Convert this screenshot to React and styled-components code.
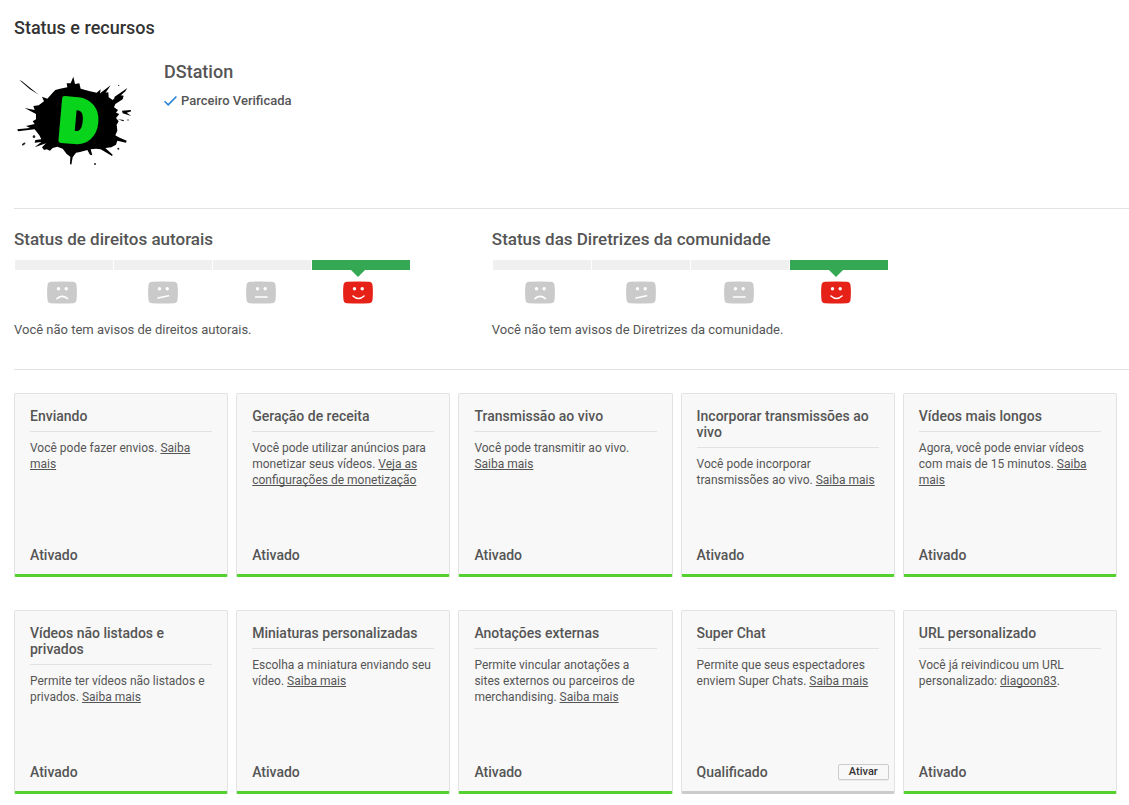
import React from "react";
import styled, {createGlobalStyle} from "styled-components";

const GlobalStyle = createGlobalStyle`
body {
    margin: 0;
    background: #fff;
    color: #555;
    font-family: Roboto, "Liberation Sans", sans-serif;
    font-size: 13px;
}`

const Page = styled.main`
padding: 16px 0 11px 14px;
`

const PageTitle = styled.h1`
margin: 0;
font-size: 18px;
line-height: 24px;
font-weight: 500;
color: #333;
`

const Channel = styled.section`
display: flex;
gap: 30px;
padding: 20px 0 28px;
border-bottom: 1px solid #e2e2e2;
`

const Avatar = styled.svg`
width: 120px;
height: 120px;
`

const AvatarLetter = styled.text`
font: 900 176px Roboto, sans-serif;
fill: #08d41c;
stroke: #08d41c;
stroke-width: 16px;
stroke-linejoin: round;
`

const Heading = styled.h2`
margin: 0;
font-size: 17px;
line-height: 24px;
font-weight: 500;
`

const ChannelName = styled(Heading)`
font-size: 18px;
`

const Verified = styled.div`
display: flex;
align-items: center;
gap: 4px;
margin-top: 9px;
line-height: 16px;
font-weight: 500;
`

const Standings = styled.div`
display: grid;
grid-template-columns: 3fr 4fr;
padding: 18px 0 30px;
border-bottom: 1px solid #e2e2e2;
`

const Gauge = styled.div`
display: flex;
gap: 1px;
max-width: 395px;
margin: 9px 0 0 1px;
`

const Segment = styled.div`
position: relative;
flex: 1;
height: 10px;
background: ${props => props.$active ? "#34a853" : "#f0f0f0"};

&::after {
    content: "";
    display: ${props => props.$active ? "block" : "none"};
    position: absolute;
    top: 10px;
    left: 39px;
    border: 7px solid transparent;
    border-top-color: #34a853;
    border-bottom: 0;
}`

const Faces = styled.div`
display: grid;
grid-template-columns: 101px 98px 97px 30px;
padding: 11px 0 0 33px;
`

const FaceIcon = styled.svg`
display: block;
width: 30px;
height: 23px;
color: ${props => props.$active ? "#e62117" : "#cacaca"};
`

const Note = styled.p`
margin: 17px 0 0;
line-height: 18px;
`

const Features = styled.ul`
display: grid;
grid-template-columns: repeat(5, 1fr);
gap: 33px 8px;
margin: 0;
padding: 23px 12px 0 0;
list-style: none;
`

const Card = styled.li`
display: flex;
flex-direction: column;
box-sizing: border-box;
min-height: 184px;
padding: 14px 15px 11px;
border: 1px solid #e2e2e2;
border-bottom: 3px solid ${props => props.$enabled ? "#54d12f" : "#ccc"};
border-radius: 2px;
background: #f8f8f8;
`

const CardTitle = styled.h3`
margin: 0 0 8px;
padding-bottom: 7px;
border-bottom: 1px solid #e2e2e2;
font-size: 14px;
line-height: 16px;
font-weight: 500;
`

const CardText = styled.p`
margin: 0;
font-size: 12px;
line-height: 16px;
`

const Link = styled.a`
color: inherit;
text-decoration: underline;
text-decoration-skip-ink: none;
`

const CardFoot = styled.div`
display: flex;
align-items: center;
justify-content: space-between;
height: 16px;
margin: auto -10px 0 0;
font-size: 14px;
line-height: 16px;
font-weight: 500;
`

const EnableButton = styled.button`
width: 51px;
height: 16px;
padding: 0;
border: 1px solid #ccc;
border-radius: 2px;
background: #f8f8f8;
box-shadow: 0 1px 0 rgba(0, 0, 0, 0.05);
color: #333;
font: 500 11px/14px Roboto, "Liberation Sans", sans-serif;
cursor: pointer;
`

const mouths = {
    sad: "M10 17.6 Q15 13.2 20.5 17.6",
    unsure: "M10 17 L20.5 14.8",
    neutral: "M9.5 16 H21",
    happy: "M10 15 Q15.5 20 21 15",
};

const Face = ({mood}) => (
    <FaceIcon viewBox="0 0 30 23" $active={mood === "happy"} aria-hidden="true">
        <path d="M4 .8 Q15 0 26 .8 Q29.2 1 29.5 4 Q30.3 11.5 29.5 19 Q29.2 22 26 22.2 Q15 23 4 22.2 Q.8 22 .5 19 Q-.3 11.5 .5 4 Q.8 1 4 .8Z" fill="currentColor" />
        <circle cx="11.5" cy="7.7" r="1.7" fill="#fff" />
        <circle cx="19.2" cy="7.7" r="1.7" fill="#fff" />
        <path d={mouths[mood]} fill="none" stroke="#fff" strokeWidth="1.6" strokeLinecap="round" />
    </FaceIcon>
);

const Standing = ({title, note}) => (
    <section>
        <Heading>{title}</Heading>
        <Gauge>
            <Segment />
            <Segment />
            <Segment />
            <Segment $active />
        </Gauge>
        <Faces>
            {Object.keys(mouths).map(mood => <Face key={mood} mood={mood} />)}
        </Faces>
        <Note>{note}</Note>
    </section>
);

const features = [
    {title: "Enviando", text: "Você pode fazer envios.", link: "Saiba mais"},
    {title: "Geração de receita", text: "Você pode utilizar anúncios para monetizar seus vídeos.", link: "Veja as configurações de monetização"},
    {title: "Transmissão ao vivo", text: "Você pode transmitir ao vivo.", link: "Saiba mais"},
    {title: "Incorporar transmissões ao vivo", text: "Você pode incorporar transmissões ao vivo.", link: "Saiba mais"},
    {title: "Vídeos mais longos", text: "Agora, você pode enviar vídeos com mais de 15 minutos.", link: "Saiba mais"},
    {title: "Vídeos não listados e privados", text: "Permite ter vídeos não listados e privados.", link: "Saiba mais"},
    {title: "Miniaturas personalizadas", text: "Escolha a miniatura enviando seu vídeo.", link: "Saiba mais"},
    {title: "Anotações externas", text: "Permite vincular anotações a sites externos ou parceiros de merchandising.", link: "Saiba mais"},
    {title: "Super Chat", text: "Permite que seus espectadores enviem Super Chats.", link: "Saiba mais", eligible: true},
    {title: "URL personalizado", text: "Você já reivindicou um URL personalizado:", link: "diagoon83", end: "."},
];

const Feature = ({title, text, link, end, eligible}) => (
    <Card $enabled={!eligible}>
        <CardTitle>{title}</CardTitle>
        <CardText>{text} <Link href="#">{link}</Link>{end}</CardText>
        <CardFoot>
            <span>{eligible ? "Qualificado" : "Ativado"}</span>
            {eligible && <EnableButton type="button">Ativar</EnableButton>}
        </CardFoot>
    </Card>
);

const App = () => (
    <>
        <GlobalStyle />
        <Page>
            <PageTitle>Status e recursos</PageTitle>
            <Channel>
                <Avatar viewBox="42 0 360 360" role="img" aria-label="DStation">
                    <path d="M220 50 L225 72 L238 70 L242 86 L270 94 L290 98 L302 88 L300 100 L325 97 L326 112 L338 120 L354 104 L371 107 L368 118 L346 132 L342 142 L354 150 L348 158 L358 162 L348 174 L356 184 L350 194 L352 212 L346 226 L356 232 L380 242 L378 248 L352 242 L348 254 L334 262 L316 264 L338 284 L336 288 L302 268 L288 266 L272 268 L277 286 L270 284 L262 270 L240 276 L228 278 L218 292 L214 314 L210 312 L211 290 L200 282 L188 266 L172 260 L158 264 L150 272 L140 268 L132 270 L126 262 L138 250 L104 262 L124 246 L104 248 L106 240 L124 238 L118 226 L104 208 L54 214 L52 208 L90 204 L78 198 L104 192 L98 184 L108 178 L108 162 L74 144 L104 150 L100 138 L116 136 L132 124 L126 110 L142 116 L158 98 L166 90 L180 86 L202 82 L200 70 L212 70Z" />
                    <path d="M58 60 L66 64 L116 104 L90 88Z M342 112 L382 84 L376 94 L350 118Z M366 152 L392 150 L394 154 L380 158 L394 168 L368 160Z M354 178 L372 180 L370 184Z M300 100 L332 76 L316 100Z" />
                    <g fill="#222">
                        <circle cx="102" cy="230" r="4" />
                        <ellipse cx="71" cy="252" rx="6" ry="3" transform="rotate(-35 71 252)" />
                        <circle cx="285" cy="312" r="3" />
                        <circle cx="356" cy="76" r="2" />
                        <circle cx="384" cy="180" r="2" />
                        <circle cx="355" cy="266" r="3" />
                    </g>
                    <AvatarLetter x="174" y="240" transform="rotate(5 174 240)">D</AvatarLetter>
                </Avatar>
                <div>
                    <ChannelName>DStation</ChannelName>
                    <Verified>
                        <svg width="13" height="12" viewBox="0 0 13 12" aria-hidden="true">
                            <path d="M.5 6.2 L4.2 9.8 L12.4 1.5" fill="none" stroke="#2783d1" strokeWidth="1.6" />
                        </svg>
                        Parceiro Verificada
                    </Verified>
                </div>
            </Channel>
            <Standings>
                <Standing title="Status de direitos autorais" note="Você não tem avisos de direitos autorais." />
                <Standing title="Status das Diretrizes da comunidade" note="Você não tem avisos de Diretrizes da comunidade." />
            </Standings>
            <Features>
                {features.map(feature => <Feature key={feature.title} {...feature} />)}
            </Features>
        </Page>
    </>
);

export default App;
